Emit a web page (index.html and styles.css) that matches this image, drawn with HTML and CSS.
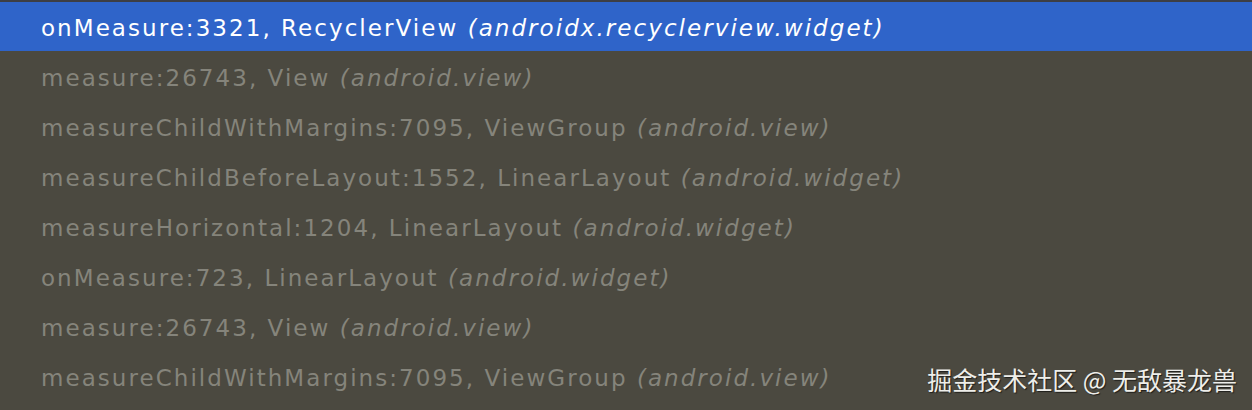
FILE: index.html
```html
<!DOCTYPE html>
<html>
<head>
<meta charset="utf-8">
<link rel="stylesheet" href="styles.css">
</head>
<body>
<div class="panel">
  <ul class="frames">
    <li class="frame selected">onMeasure:3321, RecyclerView <i>(androidx.recyclerview.widget)</i></li>
    <li class="frame">measure:26743, View <i>(android.view)</i></li>
    <li class="frame">measureChildWithMargins:7095, ViewGroup <i>(android.view)</i></li>
    <li class="frame">measureChildBeforeLayout:1552, LinearLayout <i>(android.widget)</i></li>
    <li class="frame">measureHorizontal:1204, LinearLayout <i>(android.widget)</i></li>
    <li class="frame">onMeasure:723, LinearLayout <i>(android.widget)</i></li>
    <li class="frame">measure:26743, View <i>(android.view)</i></li>
    <li class="frame">measureChildWithMargins:7095, ViewGroup <i>(android.view)</i></li>
  </ul>
  <div class="watermark">掘金技术社区 @ 无敌暴龙兽</div>
</div>
</body>
</html>
```
FILE: styles.css
```css
html, body {
  margin: 0;
  padding: 0;
  background: #4b4940;
}
.panel {
  position: relative;
  width: 1252px;
  height: 410px;
  overflow: hidden;
  background: #4b4940;
  border-top: 2px solid #3d3e44;
  box-sizing: border-box;
}
.frames {
  list-style: none;
  margin: 0;
  padding: 0;
}
.frame {
  box-sizing: border-box;
  height: 50px;
  padding-top: 4px;
  line-height: 46px;
  padding-left: 41px;
  font-family: "DejaVu Sans", sans-serif;
  font-size: 23px;
  letter-spacing: 2.05px;
  color: #85847b;
  white-space: nowrap;
}
.frame i {
  font-style: oblique;
}
.frame.selected {
  background: #2f64c9;
  color: #ffffff;
  height: 49px;
  padding-top: 3px;
}
.watermark {
  position: absolute;
  right: 15px;
  bottom: 17px;
  font-family: "Noto Sans CJK SC", sans-serif;
  font-size: 25px;
  line-height: 28px;
  color: #eeeeea;
  text-shadow: 1px 1px 1px rgba(0,0,0,0.6);
}
```
